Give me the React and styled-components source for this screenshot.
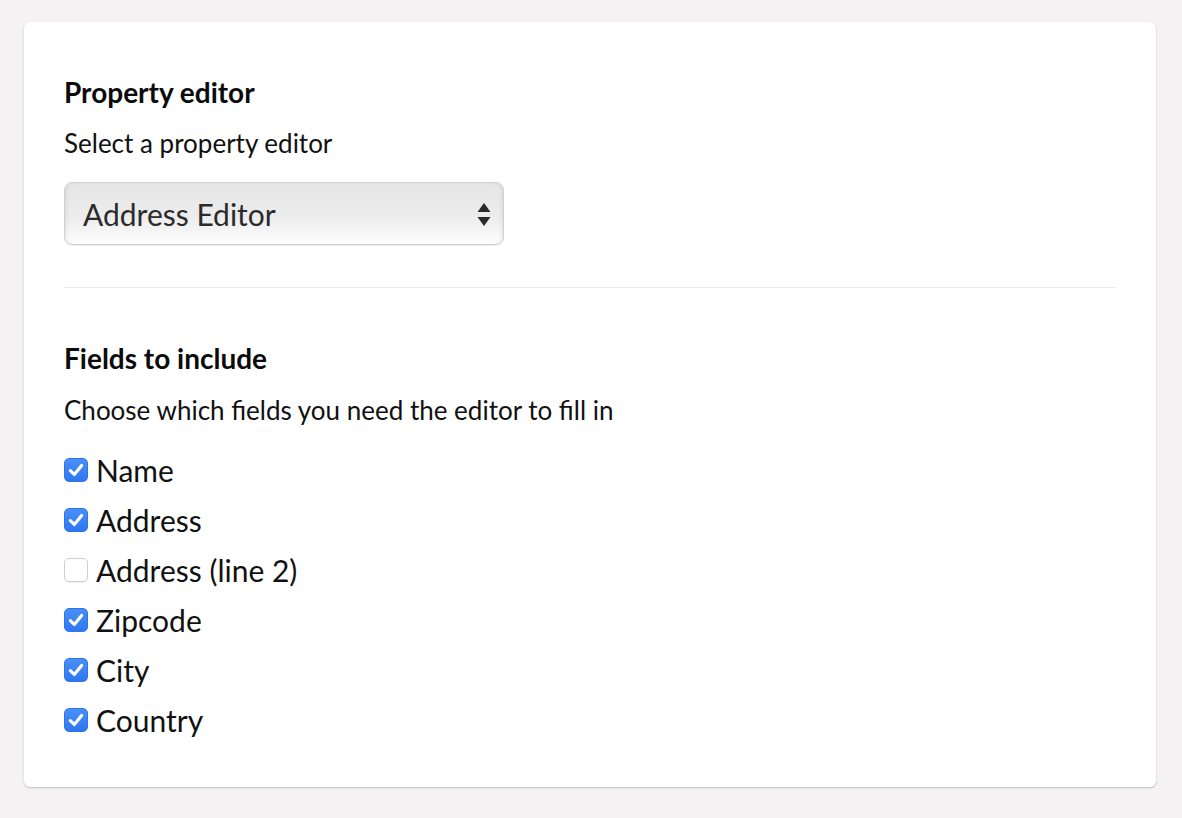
import React from "react";
import styled, { createGlobalStyle } from "styled-components";

const Global = createGlobalStyle`
  html, body { margin: 0; padding: 0; }
  body {
    background: #f4f2f2;
    font-family: Lato, "Open Sans", sans-serif;
    color: #111;
  }
`;

const Page = styled.div`
  padding: 22px 26px 30px 24px;
`;

const Card = styled.div`
  background: #fff;
  border-radius: 6px;
  box-shadow: 0 1px 2px rgba(0, 0, 0, 0.22), 0 0 1px rgba(0, 0, 0, 0.06);
  padding: 55px 40px 42px 40px;
`;

const Section = styled.section`
  display: flex;
  flex-direction: column;
`;

const Heading = styled.h2`
  margin: 0;
  font-size: 28px;
  line-height: 30px;
  font-weight: 700;
  color: #0b0b0b;
`;

const Description = styled.p`
  margin: ${(p) => p.$top}px 0 0 0;
  font-size: 26px;
  line-height: 30px;
  color: #111;
`;

const SelectBox = styled.div`
  margin-top: 24px;
  width: 440px;
  height: 63px;
  box-sizing: border-box;
  border: 1px solid #cfcfcf;
  border-radius: 8px;
  background: linear-gradient(to bottom, #e6e6e6 0%, #ececec 55%, #fdfdfd 100%);
  box-shadow: inset 3px 0 4px -2px rgba(0, 0, 0, 0.08), inset -3px 0 4px -2px rgba(0, 0, 0, 0.08),
    0 1px 1px rgba(0, 0, 0, 0.08);
  display: flex;
  align-items: center;
  justify-content: space-between;
  padding: 0 12px 0 18px;
  font-size: 30px;
  color: #2b2b2b;
`;

const Divider = styled.hr`
  margin: 42px 0 0 0;
  border: 0;
  border-top: 1px solid #ebebeb;
  height: 0;
`;

const SectionTwo = styled(Section)`
  margin-top: 55px;
`;

const List = styled.div`
  margin-top: 20px;
  display: flex;
  flex-direction: column;
`;

const Row = styled.label`
  height: 50px;
  display: flex;
  align-items: center;
  gap: 8px;
  font-size: 30px;
  color: #111;
`;

const Box = styled.span`
  width: 24px;
  height: 24px;
  box-sizing: border-box;
  border-radius: 5px;
  flex: none;
  display: flex;
  align-items: center;
  justify-content: center;
  background: ${(p) => (p.$checked ? "linear-gradient(to bottom, #4a8ff8, #2f77f1)" : "#fff")};
  border: 1px solid ${(p) => (p.$checked ? "#2f74ec" : "#cfcfcf")};
  box-shadow: ${(p) => (p.$checked ? "none" : "0 1px 1px rgba(0,0,0,0.06)")};
`;

const Arrows = () => (
  <svg width="14" height="30" viewBox="0 0 14 30">
    <path d="M7 4 L13.5 13 H0.5 Z" fill="#2a2a2a" />
    <path d="M7 27 L13.5 18 H0.5 Z" fill="#2a2a2a" />
  </svg>
);

const Check = () => (
  <svg width="18" height="18" viewBox="0 0 16 16">
    <path d="M3 8.5 L6.5 12 L13 4" fill="none" stroke="#fff" strokeWidth="2.8" strokeLinecap="round" strokeLinejoin="round" />
  </svg>
);

const fields = [
  { label: "Name", checked: true },
  { label: "Address", checked: true },
  { label: "Address (line 2)", checked: false },
  { label: "Zipcode", checked: true },
  { label: "City", checked: true },
  { label: "Country", checked: true },
];

export default function App() {
  return (
    <Page>
      <Global />
      <Card>
        <Section>
          <Heading>Property editor</Heading>
          <Description $top={21}>Select a property editor</Description>
          <SelectBox>
            <span>Address Editor</span>
            <Arrows />
          </SelectBox>
        </Section>
        <Divider />
        <SectionTwo>
          <Heading>Fields to include</Heading>
          <Description $top={22}>Choose which fields you need the editor to fill in</Description>
          <List>
            {fields.map((f) => (
              <Row key={f.label}>
                <Box $checked={f.checked}>{f.checked && <Check />}</Box>
                <span>{f.label}</span>
              </Row>
            ))}
          </List>
        </SectionTwo>
      </Card>
    </Page>
  );
}
